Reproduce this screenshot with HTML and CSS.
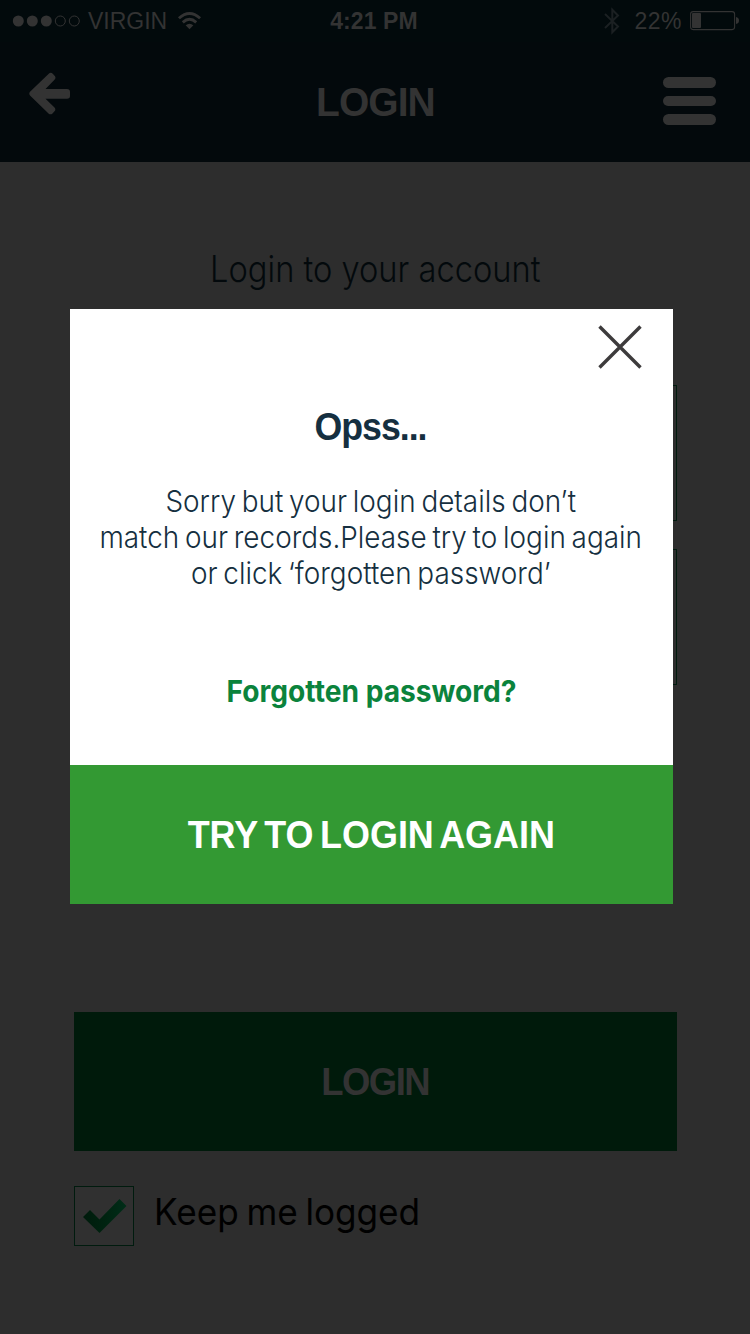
FILE: index.html
```html
<!DOCTYPE html>
<html lang="en">
<head>
<meta charset="utf-8">
<title>Login</title>
<link rel="stylesheet" href="styles.css">
</head>
<body>
<div class="screen">
  <header class="header">
    <div class="status">
      <div class="status-left">
        <svg class="signal" width="70" height="14" viewBox="0 0 70 14"><g fill="#333"><circle cx="7.3" cy="7" r="5.5"/><circle cx="21.3" cy="7" r="5.5"/><circle cx="35.3" cy="7" r="5.5"/></g><g fill="none" stroke="#333"><circle cx="49.3" cy="7" r="5"/><circle cx="63.3" cy="7" r="5"/></g></svg>
        <span class="carrier">VIRGIN</span>
        <svg class="wifi" width="25" height="20" viewBox="0 0 26 20"><g fill="none" stroke="#333" stroke-width="3"><path d="M2 7.2Q13-2.8 24 7.2"/><path d="M6 11.4Q13 5.2 20 11.4"/></g><path d="M9 14.5Q13 11.3 17 14.5L13 18.5Z" fill="#333"/></svg>
      </div>
      <span class="clock">4:21 PM</span>
      <div class="status-right">
        <svg class="bluetooth" width="16" height="28" viewBox="0 0 16 28"><path d="M1 7L14 19.500L8.300 25.300V2.700L14 8.500L1 21" fill="none" stroke="#1b2022" stroke-width="2"/></svg>
        <span class="percent">22%</span>
        <svg class="battery" width="50" height="20" viewBox="0 0 50 20"><rect x=".6" y=".6" width="44" height="18" rx="2.5" fill="none" stroke="#333" stroke-width="1.1"/><rect x="2" y="2" width="9" height="15" rx="1" fill="#333"/><path d="M46 6Q49 6.500 49 9.500Q49 12.500 46 13Z" fill="#333"/></svg>
      </div>
    </div>
    <div class="nav">
      <svg class="back" width="42" height="44" viewBox="0 0 42 44"><path d="M20 1.500Q22 0 24 2L26 4.200Q27.200 6 25.500 7.800L16.500 17H38Q41 17 41 20V24Q41 26.700 38 26.700H16.500L25.500 35.500Q27.200 37.500 25.500 39.200L23.500 41.500Q21.500 43.200 19.500 41.500L1 23.500Q-.5 21.500 1 19.700Z" fill="#333"/></svg>
      <h1 class="nav-title">LOGIN</h1>
      <div class="menu"><i></i><i></i><i></i></div>
    </div>
  </header>
  <main class="main">
    <p class="intro"><span>Login to your account</span></p>
    <div class="field"></div>
    <div class="field"></div>
    <div class="submit"><span>LOGIN</span></div>
    <div class="remember">
      <div class="checkbox"><svg width="44" height="36" viewBox="0 0 44 36"><defs><linearGradient id="tick" x1="0" y1="0" x2="1" y2="0"><stop offset="0" stop-color="#001b0c"/><stop offset=".5" stop-color="#002310"/><stop offset="1" stop-color="#002d18"/></linearGradient></defs><path d="M0 18L7 11L16.500 20.500L36.500 0L43.500 7L16.500 34Z" fill="url(#tick)"/></svg></div>
      <span class="remember-label">Keep me logged</span>
    </div>
  </main>
  <section class="dialog">
    <svg class="close" width="44" height="44" viewBox="0 0 44 44"><path d="M1.500 1.500L42.500 42.500M42.500 1.500L1.500 42.500" stroke="#3d3b3c" stroke-width="3.400"/></svg>
    <div class="dialog-body">
      <h2 class="dialog-title">Opss...</h2>
      <p class="message"><span>Sorry but your login details don’t</span><span>match our records.Please try to login again</span><span>or click ‘forgotten password’</span></p>
      <a class="forgot">Forgotten password?</a>
    </div>
    <div class="retry"><span>TRY TO LOGIN AGAIN</span></div>
  </section>
</div>
</body>
</html>
```
FILE: styles.css
```css
* { box-sizing: border-box; margin: 0; padding: 0; }
body { background: #2d2d2d; font-family: Inter, "Liberation Sans", sans-serif; }
svg { display: block; flex: none; }
span, a { white-space: nowrap; }
.screen { position: relative; width: 750px; height: 1334px; overflow: hidden; background: #2d2d2d; }
.header { height: 162px; background: #03090c; color: #333; }
.status { height: 42px; background: #020a0c; display: grid; grid-template-columns: 1fr auto 1fr; align-items: center; font: 23px/40px "Liberation Sans", sans-serif; }
.status-left, .status-right { display: flex; align-items: center; height: 40px; }
.status-left { padding-left: 11px; }
.carrier { margin-left: 7px; }
.wifi { margin-left: 10px; }
.clock { margin-right: 2px; font-weight: 700; letter-spacing: .1px; }
.status-right { justify-content: flex-end; padding-right: 10px; }
.percent { margin: 0 8px 0 14px; letter-spacing: .5px; }
.nav { height: 120px; display: grid; grid-template-columns: 1fr auto 1fr; padding: 0 34px; }
.back { margin: 30px 0 0 -5px; }
.nav-title { font: 700 41px/120px "Liberation Sans", sans-serif; letter-spacing: -1px; transform: scaleX(.95); }
.menu { justify-self: end; display: flex; flex-direction: column; gap: 8px; margin-top: 35px; }
.menu i { width: 53px; height: 10.600px; border-radius: 6px; background: #333; }
.main { padding: 0 73px 0 74px; }
.intro { height: 223px; padding-top: 82px; text-align: center; font-size: 37px; font-weight: 300; line-height: 50px; color: #03090c; }
.intro span { display: inline-block; transform: scaleX(.882); }
.field { height: 136px; margin-bottom: 28px; border: 1px solid #001b0e; }
.submit { height: 139px; margin-top: 327px; background: #001a0b; color: #333; text-align: center; font: 700 38px/141px "Liberation Sans", sans-serif; letter-spacing: -1.6px; }
.submit span { display: inline-block; transform: scaleX(.96); }
.remember { display: flex; margin-top: 35px; }
.checkbox { width: 60px; height: 60px; padding: 2px 0 0 2px; border: 1px solid #001b0e; background: #303030; display: flex; align-items: center; justify-content: center; }
.remember-label { margin-left: 20px; font-size: 37px; line-height: 51px; color: #000; word-spacing: -2.3px; transform: scaleX(.95); transform-origin: left; }
.dialog { position: absolute; left: 70px; top: 309px; width: 603px; height: 595px; background: #fff; color: #152f40; display: flex; flex-direction: column; }
.close { margin: 16px 0 0 527.500px; }
.dialog-body { height: 396px; display: flex; flex-direction: column; align-items: center; }
.dialog-title { margin: 33px 2px 0 0; font: 700 38px/50px "Liberation Sans", sans-serif; letter-spacing: -1.1px; transform: scaleX(.94); }
.message { margin: 31px 2px 0 0; display: flex; flex-direction: column; align-items: center; font-size: 30px; font-weight: 300; line-height: 36px; word-spacing: -2.2px; transform: scaleX(.93); }
.forgot { margin-top: 80px; font-weight: 700; font-size: 30px; line-height: 40px; color: #0b833c; transform: scaleX(.938); }
.retry { height: 139px; background: #339933; color: #fff; text-align: center; font: 700 38px/141px "Liberation Sans", sans-serif; word-spacing: -3.5px; }
.retry span { display: inline-block; transform: scaleX(.945); }
```
